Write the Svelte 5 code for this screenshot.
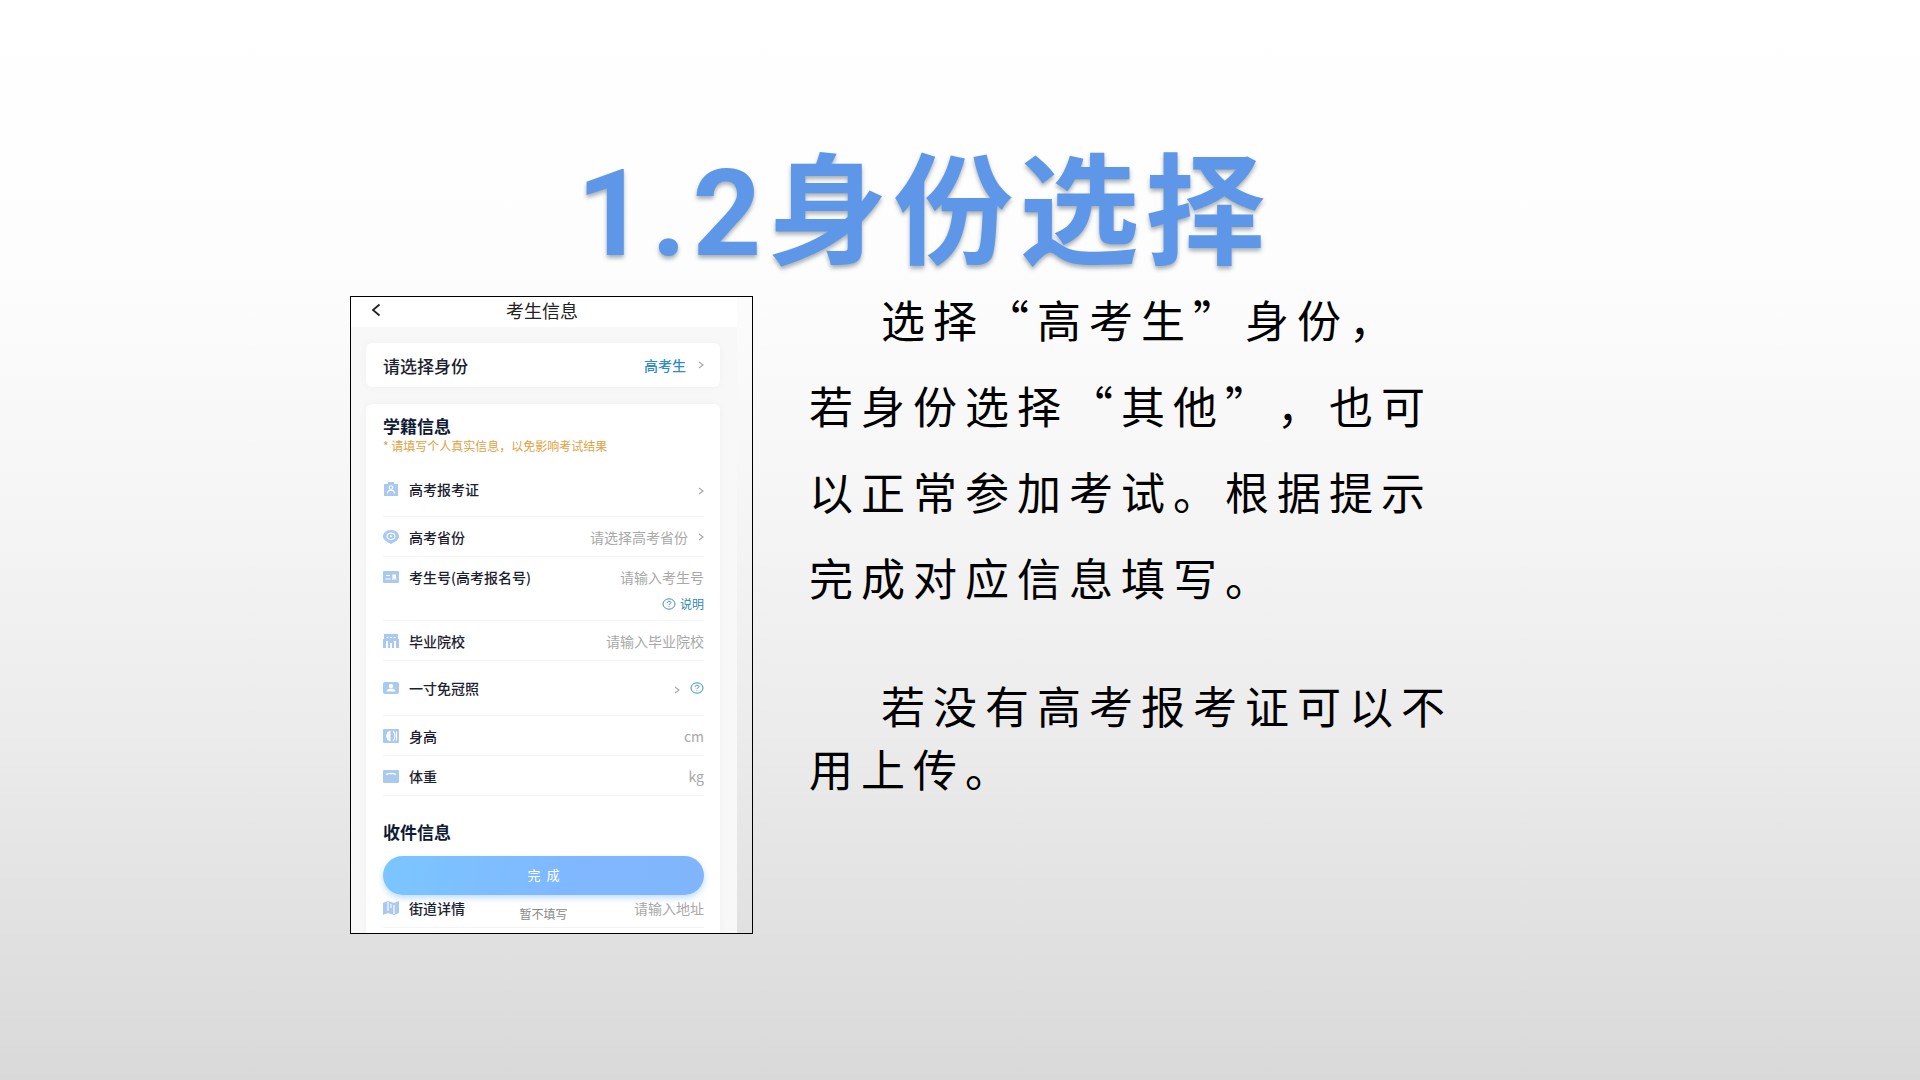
<script lang="ts">
  type Field = {
    id: string;
    icon: string;
    label: string;
    kind: "link" | "select" | "input" | "photo";
    hint?: string;
    tall?: boolean;
    help?: boolean;
  };

  const fields: Field[] = [
    { id: "ticket", icon: "ticket", label: "高考报考证", kind: "link", tall: true },
    { id: "province", icon: "pin", label: "高考省份", kind: "select", hint: "请选择高考省份" },
    { id: "number", icon: "card", label: "考生号(高考报名号)", kind: "input", hint: "请输入考生号", help: true },
    { id: "school", icon: "school", label: "毕业院校", kind: "input", hint: "请输入毕业院校" },
    { id: "photo", icon: "photo", label: "一寸免冠照", kind: "photo", tall: true },
    { id: "height", icon: "height", label: "身高", kind: "input", hint: "cm" },
    { id: "weight", icon: "weight", label: "体重", kind: "input", hint: "kg" },
  ];
</script>

{#snippet chevron()}
  <svg class="chevron" viewBox="0 0 6 8" aria-hidden="true"><path d="M1 1l4 3-4 3" /></svg>
{/snippet}

{#snippet question()}
  <svg class="question" viewBox="0 0 14 12" aria-hidden="true">
    <ellipse cx="7" cy="6" rx="6" ry="5.2" />
    <path d="M5.2 4.8c0-2 3.7-2 3.7-.2 0 1.200-1.900 1.200-1.900 2.400M7 8.200v.9" />
  </svg>
{/snippet}

{#snippet icon(name: string)}
  <svg class="icon" viewBox="0 0 16 14" aria-hidden="true">
    {#if name === "ticket"}
      <path class="base" d="M1 2h4V0h6v2h4v12H1z" />
      <circle class="line" cx="8" cy="5.500" r="1.800" />
      <path class="line" d="M4.500 11.500c.2-4.500 6.800-4.500 7 0" />
    {:else if name === "pin"}
      <path class="base" d="M8 0c5 0 8 3 8 6.500 0 3-3 5-8 7.500-5-2.500-8-4.500-8-7.500C0 3 3 0 8 0z" />
      <ellipse class="line" cx="8" cy="6.300" rx="4" ry="3.200" />
      <circle class="mark" cx="8" cy="6.300" r="1" />
    {:else if name === "card"}
      <rect class="base" y="1" width="16" height="12" rx="1" />
      <path class="line" d="M3 5.500h4M2.500 9h5M9 9h4.500M9.500 6h3.500" />
      <rect class="mark" x="9.500" y="4.500" width="3.500" height="4" />
    {:else if name === "school"}
      <path class="base" d="M1 0h14v5h1v9h-3V7h-2v7H9V9H7v5H5V7H3v7H0V5h1z" />
      <path class="line" d="M3.500 3.500h2M7 3.500h2M10.500 3.500h2" />
    {:else if name === "photo"}
      <rect class="base" y="1" width="16" height="12" rx="2" />
      <ellipse class="mark" cx="8" cy="5" rx="2.200" ry="2.300" />
      <path class="mark" d="M3.500 10.500c0-4 9-4 9 0z" />
    {:else if name === "height"}
      <rect class="base" width="16" height="14" rx="1" />
      <path class="mark" d="M4.500 3l3-1.500v11L4.500 11 3 7z" />
      <path class="line" d="M10 2c2.500 2 2.500 8 0 10M13.500 2.500v9" />
    {:else if name === "weight"}
      <rect class="base" y="1" width="16" height="13" rx="1" />
      <path class="line" d="M3 5.500c2.500-1.500 7.500-1.500 10 0M8 4v1.500" />
    {:else if name === "map"}
      <path class="base" d="M0 2l5-2 6 2 5-2v12l-5 2-6-2-5 2z" />
      <path class="line" d="M5 1v9M11 4v9M8 3v4" />
    {/if}
  </svg>
{/snippet}

<main class="slide">
  <div class="content">
    <h1>1.2身份选择</h1>

    <div class="columns">
      <form class="phone" onsubmit={(e) => e.preventDefault()}>
        <header class="bar">
          <button class="back" type="button" aria-label="返回">
            <svg viewBox="0 0 10 14" aria-hidden="true"><path d="M8.500 1.500L2 7l6.500 5.500" /></svg>
          </button>
          <h2>考生信息</h2>
        </header>

        <div class="screen">
          <section class="card identity">
            <label for="identity">请选择身份</label>
            <select id="identity">
              <option>高考生</option>
              <option>其他</option>
            </select>
            {@render chevron()}
          </section>

          <section class="card details">
            <h3>学籍信息</h3>
            <p class="note">* 请填写个人真实信息，以免影响考试结果</p>

            {#each fields as field (field.id)}
              <div class="field">
                <div class="row" class:tall={field.tall}>
                  {@render icon(field.icon)}
                  <label for={field.id}>{field.label}</label>
                  {#if field.kind === "input"}
                    <input id={field.id} type="text" placeholder={field.hint} />
                  {:else if field.kind === "select"}
                    <select id={field.id}><option>{field.hint}</option></select>
                    {@render chevron()}
                  {:else}
                    <button id={field.id} class="open" type="button">{@render chevron()}</button>
                    {#if field.kind === "photo"}
                      <button class="help" type="button" aria-label="照片说明">{@render question()}</button>
                    {/if}
                  {/if}
                </div>
                {#if field.help}
                  <div class="help-row">
                    <button class="help" type="button">{@render question()}说明</button>
                  </div>
                {/if}
              </div>
            {/each}

            <h3 class="mail">收件信息</h3>
            <button class="submit" type="submit">完&nbsp; 成</button>
            <div class="field address">
              <div class="row">
                {@render icon("map")}
                <label for="street">街道详情</label>
                <input id="street" type="text" placeholder="请输入地址" />
              </div>
              <button class="skip" type="button">暂不填写</button>
            </div>
          </section>
        </div>
      </form>

      <article class="copy">
        <p class="lead">
          选择“高考生”身份，<br />若身份选择“其他”，也可<br />以正常参加考试。根据提示<br />完成对应信息填写。
        </p>
        <p>若没有高考报考证可以不<br />用上传。</p>
      </article>
    </div>
  </div>
</main>

<style>
  :global(body) {
    margin: 0;
  }

  .slide {
    box-sizing: border-box;
    min-height: 100vh;
    padding: 132px 24px 80px 350px;
    background: linear-gradient(#fff 0%, #fdfdfd 24%, #f6f6f6 45%, #ececec 67%, #d9d9d9 100%);
    color: #000;
    font-family: "Noto Sans CJK SC", sans-serif;
  }

  .content {
    max-width: 1104px;
  }

  h1,
  h2,
  h3,
  p {
    margin: 0;
  }

  h1 {
    padding-left: 44px;
    color: #5f97e8;
    font: 700 120px/164px Roboto, "Noto Sans CJK SC", sans-serif;
    letter-spacing: 6px;
    text-align: center;
    text-shadow: 0 3px 4px rgba(60, 80, 90, 0.45);
  }

  .columns {
    display: grid;
    grid-template-columns: minmax(0, 403px) minmax(0, 1fr);
    align-items: start;
    gap: 56px;
  }

  .phone {
    border: 1px solid #000;
    padding-right: 15px;
    overflow: hidden;
  }

  .bar {
    box-sizing: border-box;
    display: grid;
    grid-template-columns: 52px 1fr 56px;
    align-items: center;
    height: 30px;
    padding-bottom: 4px;
    background: #fff;
  }

  h2 {
    color: #222;
    font-size: 18px;
    font-weight: 400;
    line-height: 24px;
    text-align: center;
  }

  button,
  input,
  select {
    margin: 0;
    border: 0;
    padding: 0;
    background: none;
    font: inherit;
  }

  button {
    cursor: pointer;
  }

  .back {
    display: flex;
    padding-left: 20px;
  }

  .back svg {
    width: 10px;
    height: 14px;
    fill: none;
    stroke: #222;
    stroke-width: 1.8;
  }

  .screen {
    display: grid;
    gap: 17px;
    padding: 16px 17px 0 15px;
    background: #f8f8f8;
  }

  .card {
    border-radius: 6px;
    padding: 0 16px 0 17px;
    background: #fff;
    box-shadow: 0 0 8px rgba(0, 0, 0, 0.04);
    color: #1b2130;
    font-size: 14px;
  }

  .identity {
    display: flex;
    align-items: center;
    gap: 12px;
    height: 44px;
  }

  label {
    font-weight: 500;
  }

  .identity label {
    flex: 1;
    font-size: 17px;
  }

  select {
    appearance: none;
    color: #a8a8a8;
    text-align-last: right;
  }

  .identity select {
    color: #2e8bc8;
    font-weight: 500;
  }

  .chevron {
    flex: none;
    width: 6px;
    height: 8px;
    fill: none;
    stroke: #aaa;
    stroke-width: 1.2;
  }

  .details {
    padding-top: 12px;
    padding-bottom: 5px;
    border-radius: 6px 6px 0 0;
  }

  h3 {
    color: #0f1a35;
    font-size: 17px;
    font-weight: 700;
    line-height: 20px;
  }

  .note {
    margin-bottom: 6px;
    color: #e2a040;
    font-size: 12px;
    line-height: 20px;
  }

  .field {
    border-bottom: 1px solid #f5f5f5;
  }

  .row {
    display: flex;
    align-items: center;
    gap: 10px;
    height: 39px;
  }

  .row.tall {
    height: 54px;
  }

  .row label {
    flex: none;
  }

  .row input,
  .row select,
  .open {
    flex: 1;
    min-width: 0;
    text-align: right;
  }

  input::placeholder {
    color: #a8a8a8;
    opacity: 1;
  }

  .icon {
    flex: none;
    width: 16px;
    height: 14px;
  }

  .base {
    fill: #a9c9ee;
  }

  .mark {
    fill: #fff;
  }

  .line {
    fill: none;
    stroke: #fff;
    stroke-width: 1.1;
  }

  .help-row {
    display: flex;
    justify-content: flex-end;
    height: 24px;
  }

  .help {
    display: flex;
    align-items: center;
    gap: 4px;
    color: #2e86b8;
    font-size: 12px;
    line-height: 16px;
  }

  .question {
    width: 14px;
    height: 12px;
    fill: none;
    stroke: #3f92c0;
    stroke-width: 1;
  }

  .help-row .help {
    height: 16px;
  }

  .mail {
    margin-top: 26px;
  }

  .submit {
    display: block;
    width: 100%;
    height: 39px;
    margin-top: 14px;
    padding-bottom: 2px;
    border-radius: 20px;
    background: linear-gradient(100deg, #7ac6ff, #80b8ff 55%, #80b5fb);
    box-shadow: 0 3px 6px rgba(128, 190, 255, 0.5);
    color: #fff;
    font-size: 13px;
  }

  .address {
    position: relative;
  }

  .address .row {
    height: 26px;
    padding-bottom: 6px;
  }

  /* floats over the address row, under the submit button */
  .skip {
    position: absolute;
    top: 10px;
    left: 50%;
    transform: translateX(-50%);
    color: #888;
    font-size: 12px;
    line-height: 18px;
  }

  .copy {
    font-family: KaiTi, STKaiti, "Noto Sans CJK SC", sans-serif;
    font-size: 44px;
    letter-spacing: 8px;
    line-height: 63px;
    text-spacing-trim: space-all;
  }

  .copy p {
    text-indent: 72px;
  }

  .copy .lead {
    margin: -20px 0 54px;
    line-height: 86px;
  }
</style>
